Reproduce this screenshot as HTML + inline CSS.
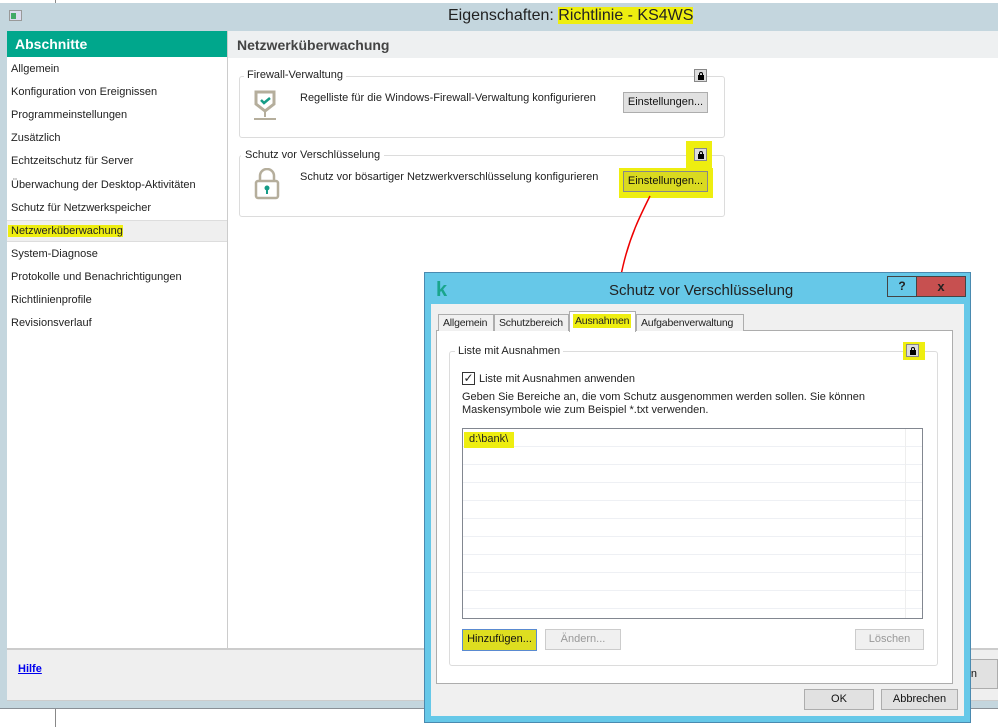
<!DOCTYPE html>
<html><head><meta charset="utf-8"><style>
*{margin:0;padding:0;box-sizing:border-box}
body{width:1000px;height:727px;position:relative;overflow:hidden;background:#fff;font-family:"Liberation Sans",sans-serif;font-size:11px;color:#222}
.a{position:absolute}
.hl{background:#eeee10}
.btn{position:absolute;border:1px solid #adadad;background:#e1e1e1;text-align:center;line-height:19px;font-size:11px;color:#111}
.gb{position:absolute;border:1px solid #dcdcdc;border-radius:3px}
.gl{position:absolute;background:#fff;padding:0 3px;font-size:11px}
.lock{position:absolute;width:13px;height:13px;border:1px solid #888;background:#ddd}
.lock:after{content:"";position:absolute;left:3px;top:5px;width:6px;height:5px;background:#000}
.lock:before{content:"";position:absolute;left:4px;top:2px;width:2px;height:3px;border:1px solid #000;border-bottom:none;border-radius:2px 2px 0 0}
.it{position:absolute;left:11px;font-size:11px}
.tab{position:absolute;border:1px solid #adadad;border-bottom:none;background:#f0f0f0;font-size:10.5px;letter-spacing:-0.2px}
</style></head><body>
<div class="a" style="left:55px;top:0;width:1px;height:4px;background:#888"></div>
<div class="a" style="left:55px;top:707px;width:1px;height:20px;background:#888"></div>
<div class="a" style="left:0;top:3px;width:998px;height:706px;background:#c4d6de;border-bottom:1px solid #8a9096"></div>
<div class="a" style="left:9px;top:10px;width:13px;height:11px;background:#dde;border:1px solid #999"><div class="a" style="left:1px;top:2px;width:5px;height:6px;background:#4a6"></div></div>
<div class="a" style="left:448px;top:7px;font-size:16px;color:#222">Eigenschaften: <span class="hl">Richtlinie - KS4WS</span></div>
<div class="a" style="left:7px;top:31px;width:220px;height:617px;background:#fff"></div>
<div class="a" style="left:7px;top:31px;width:220px;height:26px;background:#00a78c;color:#fff;font-weight:bold;font-size:14px;padding:5px 0 0 8px">Abschnitte</div>
<div class="a" style="left:7px;top:220px;width:220px;height:22px;background:#efefef;border-top:1px solid #ddd;border-bottom:1px solid #ddd"></div>
<div class="it" style="top:63px">Allgemein</div>
<div class="it" style="top:86px">Konfiguration von Ereignissen</div>
<div class="it" style="top:109px">Programmeinstellungen</div>
<div class="it" style="top:132px">Zusätzlich</div>
<div class="it" style="top:155px">Echtzeitschutz für Server</div>
<div class="it" style="top:179px">Überwachung der Desktop-Aktivitäten</div>
<div class="it" style="top:202px">Schutz für Netzwerkspeicher</div>
<div class="it hl" style="top:225px;left:8px;padding-left:3px">Netzwerküberwachung</div>
<div class="it" style="top:248px">System-Diagnose</div>
<div class="it" style="top:271px">Protokolle und Benachrichtigungen</div>
<div class="it" style="top:294px">Richtlinienprofile</div>
<div class="it" style="top:317px">Revisionsverlauf</div>
<div class="a" style="left:227px;top:31px;width:1px;height:617px;background:#ccc"></div>
<div class="a" style="left:228px;top:31px;width:770px;height:617px;background:#fff"></div>
<div class="a" style="left:228px;top:31px;width:770px;height:27px;background:#eef0f1;font-weight:bold;font-size:14px;color:#444;padding:6px 0 0 9px">Netzwerküberwachung</div>
<div class="gb" style="left:239px;top:76px;width:486px;height:62px"></div>
<div class="gl" style="left:244px;top:69px">Firewall-Verwaltung</div>
<div class="lock" style="left:694px;top:69px"></div>
<svg class="a" style="left:252px;top:89px" width="30" height="34"><path d="M4 3h18v12l-9 7-9-7z" fill="none" stroke="#b5ae9c" stroke-width="3"/><path d="M9 11l3 3 6-5" fill="none" stroke="#159c87" stroke-width="2.5"/><path d="M13 23v5M2 30h22" stroke="#b5ae9c" stroke-width="2"/></svg>
<div class="a" style="left:300px;top:92px">Regelliste für die Windows-Firewall-Verwaltung konfigurieren</div>
<div class="btn" style="left:623px;top:92px;width:85px;height:21px">Einstellungen...</div>
<div class="gb" style="left:239px;top:155px;width:486px;height:62px"></div>
<div class="gl hl" style="left:241px;top:149px;padding:0 4px">Schutz vor Verschlüsselung</div>
<div class="a hl" style="left:686px;top:141px;width:26px;height:28px"></div>
<div class="lock" style="left:694px;top:148px"></div>
<svg class="a" style="left:253px;top:168px" width="30" height="34"><path d="M7 13v-5a7 7 0 0 1 14 0v5" fill="none" stroke="#b5ae9c" stroke-width="2.5"/><rect x="3" y="13" width="22" height="17" rx="2" fill="none" stroke="#b5ae9c" stroke-width="2.5"/><circle cx="14" cy="20" r="2.5" fill="#159c87"/><path d="M14 21v5" stroke="#159c87" stroke-width="2"/></svg>
<div class="a" style="left:300px;top:171px">Schutz vor bösartiger Netzwerkverschlüsselung konfigurieren</div>
<div class="a hl" style="left:619px;top:168px;width:94px;height:30px"></div>
<div class="btn" style="left:623px;top:171px;width:85px;height:21px;background:#dada20;border-color:#888">Einstellungen...</div>
<div class="a" style="left:7px;top:648px;width:991px;height:53px;background:#efefef;border-top:2px solid #ccc;border-bottom:1px solid #ccc"></div>
<div class="a" style="left:18px;top:663px;color:#0000ee;font-weight:bold;text-decoration:underline">Hilfe</div>
<div class="btn" style="left:930px;top:659px;width:68px;height:30px;line-height:28px;text-align:right;padding-right:20px">en</div>
<svg class="a" style="left:590px;top:190px" width="70" height="130"><path d="M60 6c-10 20-20 40-27 70-5 22-8 38-9 44" fill="none" stroke="#e00" stroke-width="1.5"/><path d="M22 100c2 10 3 18 2 28M24 128c5-4 10-8 22-10" fill="none" stroke="#e00" stroke-width="1.5"/></svg>
<div class="a" style="left:424px;top:272px;width:547px;height:451px;background:#66c8e8;border:1px solid #4a8ab0"></div>
<div class="a" style="left:436px;top:279px;font-size:20px;font-weight:bold;color:#1aa58c">k</div>
<div class="a" style="left:609px;top:282px;font-size:15px;color:#222">Schutz vor Verschlüsselung</div>
<div class="a" style="left:887px;top:276px;width:30px;height:21px;border:1px solid #444;background:#66c8e8;text-align:center;font-weight:bold;font-size:12px;line-height:19px">?</div>
<div class="a" style="left:917px;top:276px;width:49px;height:21px;border:1px solid #444;border-left:none;background:#c75050;text-align:center;font-weight:bold;font-size:13px;line-height:19px">x</div>
<div class="a" style="left:431px;top:304px;width:533px;height:412px;background:#f0f0f0"></div>
<div class="a" style="left:436px;top:330px;width:517px;height:354px;background:#fff;border:1px solid #adadad"></div>
<div class="tab" style="left:438px;top:314px;width:56px;height:17px;padding:2px 0 0 4px">Allgemein</div>
<div class="tab" style="left:494px;top:314px;width:75px;height:17px;padding:2px 0 0 4px">Schutzbereich</div>
<div class="a" style="left:569px;top:311px;width:67px;height:21px;border:1px solid #adadad;border-bottom:none;background:#fff;font-size:10.5px;letter-spacing:-0.2px"><span class="a hl" style="left:3px;top:2px;padding:1px 2px">Ausnahmen</span></div>
<div class="tab" style="left:636px;top:314px;width:108px;height:17px;padding:2px 0 0 4px">Aufgabenverwaltung</div>
<div class="gb" style="left:449px;top:351px;width:489px;height:315px"></div>
<div class="gl" style="left:455px;top:345px">Liste mit Ausnahmen</div>
<div class="a hl" style="left:903px;top:342px;width:22px;height:18px"></div>
<div class="lock" style="left:906px;top:344px"></div>
<div class="a" style="left:462px;top:372px;width:13px;height:13px;border:1px solid #333;background:#fff;font-size:12px;line-height:11px;text-align:center">✓</div>
<div class="a" style="left:479px;top:373px">Liste mit Ausnahmen anwenden</div>
<div class="a" style="left:462px;top:391px;line-height:13px">Geben Sie Bereiche an, die vom Schutz ausgenommen werden sollen. Sie können<br>Maskensymbole wie zum Beispiel *.txt verwenden.</div>
<div class="a" style="left:462px;top:428px;width:461px;height:191px;border:1px solid #828790;background:#fff;background-image:repeating-linear-gradient(#fff 0 17px,#eef0f4 17px 18px)"></div>
<div class="a" style="left:905px;top:429px;width:1px;height:189px;background:#eee"></div>
<div class="a hl" style="left:464px;top:432px;padding:1px 6px 3px 5px">d:\bank\</div>
<div class="btn" style="left:462px;top:629px;width:75px;height:22px;background:#dede20;border-color:#5a8ad0">Hinzufügen...</div>
<div class="btn" style="left:545px;top:629px;width:76px;height:21px;background:#f0f0f0;color:#999;border-color:#ccc">Ändern...</div>
<div class="btn" style="left:855px;top:629px;width:69px;height:21px;background:#f0f0f0;color:#999;border-color:#ccc">Löschen</div>
<div class="btn" style="left:804px;top:689px;width:70px;height:21px">OK</div>
<div class="btn" style="left:881px;top:689px;width:77px;height:21px">Abbrechen</div>
</body></html>
